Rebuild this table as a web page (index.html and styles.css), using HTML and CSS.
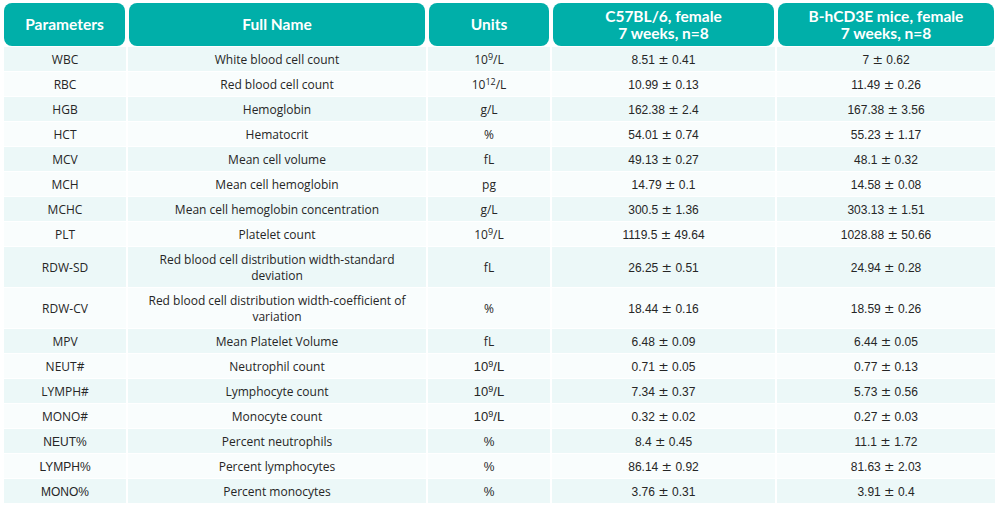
FILE: index.html
```html
<!DOCTYPE html>
<html>
<head>
<meta charset="utf-8">
<link rel="stylesheet" href="styles.css">
</head>
<body>
<div class="table">
  <div class="row head">
    <div class="cell">Parameters</div>
    <div class="cell">Full Name</div>
    <div class="cell">Units</div>
    <div class="cell">C57BL/6, female<br>7 weeks, n=8</div>
    <div class="cell">B-hCD3E mice, female<br>7 weeks, n=8</div>
  </div>
  <div class="row odd"><div class="cell">WBC</div><div class="cell">White blood cell count</div><div class="cell"><span>10<sup>9</sup>/L</span></div><div class="cell num"><span>8.51 <span class="pm">±</span> 0.41</span></div><div class="cell num"><span>7 <span class="pm">±</span> 0.62</span></div></div>
  <div class="row even"><div class="cell">RBC</div><div class="cell">Red blood cell count</div><div class="cell"><span>10<sup>12</sup>/L</span></div><div class="cell num"><span>10.99 <span class="pm">±</span> 0.13</span></div><div class="cell num"><span>11.49 <span class="pm">±</span> 0.26</span></div></div>
  <div class="row odd"><div class="cell">HGB</div><div class="cell">Hemoglobin</div><div class="cell">g/L</div><div class="cell num"><span>162.38 <span class="pm">±</span> 2.4</span></div><div class="cell num"><span>167.38 <span class="pm">±</span> 3.56</span></div></div>
  <div class="row even"><div class="cell">HCT</div><div class="cell">Hematocrit</div><div class="cell">%</div><div class="cell num"><span>54.01 <span class="pm">±</span> 0.74</span></div><div class="cell num"><span>55.23 <span class="pm">±</span> 1.17</span></div></div>
  <div class="row odd"><div class="cell">MCV</div><div class="cell">Mean cell volume</div><div class="cell">fL</div><div class="cell num"><span>49.13 <span class="pm">±</span> 0.27</span></div><div class="cell num"><span>48.1 <span class="pm">±</span> 0.32</span></div></div>
  <div class="row even"><div class="cell">MCH</div><div class="cell">Mean cell hemoglobin</div><div class="cell">pg</div><div class="cell num"><span>14.79 <span class="pm">±</span> 0.1</span></div><div class="cell num"><span>14.58 <span class="pm">±</span> 0.08</span></div></div>
  <div class="row odd"><div class="cell">MCHC</div><div class="cell">Mean cell hemoglobin concentration</div><div class="cell">g/L</div><div class="cell num"><span>300.5 <span class="pm">±</span> 1.36</span></div><div class="cell num"><span>303.13 <span class="pm">±</span> 1.51</span></div></div>
  <div class="row even"><div class="cell">PLT</div><div class="cell">Platelet count</div><div class="cell"><span>10<sup>9</sup>/L</span></div><div class="cell num"><span>1119.5 <span class="pm">±</span> 49.64</span></div><div class="cell num"><span>1028.88 <span class="pm">±</span> 50.66</span></div></div>
  <div class="row odd"><div class="cell">RDW-SD</div><div class="cell wrap">Red blood cell distribution width-standard deviation</div><div class="cell">fL</div><div class="cell num"><span>26.25 <span class="pm">±</span> 0.51</span></div><div class="cell num"><span>24.94 <span class="pm">±</span> 0.28</span></div></div>
  <div class="row even"><div class="cell">RDW-CV</div><div class="cell wrap">Red blood cell distribution width-coefficient of variation</div><div class="cell">%</div><div class="cell num"><span>18.44 <span class="pm">±</span> 0.16</span></div><div class="cell num"><span>18.59 <span class="pm">±</span> 0.26</span></div></div>
  <div class="row odd"><div class="cell">MPV</div><div class="cell">Mean Platelet Volume</div><div class="cell">fL</div><div class="cell num"><span>6.48 <span class="pm">±</span> 0.09</span></div><div class="cell num"><span>6.44 <span class="pm">±</span> 0.05</span></div></div>
  <div class="row even"><div class="cell">NEUT#</div><div class="cell">Neutrophil count</div><div class="cell alt"><span>10<sup>9</sup>/L</span></div><div class="cell num"><span>0.71 <span class="pm">±</span> 0.05</span></div><div class="cell num"><span>0.77 <span class="pm">±</span> 0.13</span></div></div>
  <div class="row odd"><div class="cell">LYMPH#</div><div class="cell">Lymphocyte count</div><div class="cell alt"><span>10<sup>9</sup>/L</span></div><div class="cell num"><span>7.34 <span class="pm">±</span> 0.37</span></div><div class="cell num"><span>5.73 <span class="pm">±</span> 0.56</span></div></div>
  <div class="row even"><div class="cell">MONO#</div><div class="cell">Monocyte count</div><div class="cell alt"><span>10<sup>9</sup>/L</span></div><div class="cell num"><span>0.32 <span class="pm">±</span> 0.02</span></div><div class="cell num"><span>0.27 <span class="pm">±</span> 0.03</span></div></div>
  <div class="row odd"><div class="cell alt2">NEUT%</div><div class="cell">Percent neutrophils</div><div class="cell alt2">%</div><div class="cell num"><span>8.4 <span class="pm">±</span> 0.45</span></div><div class="cell num"><span>11.1 <span class="pm">±</span> 1.72</span></div></div>
  <div class="row even"><div class="cell alt2">LYMPH%</div><div class="cell">Percent lymphocytes</div><div class="cell alt2">%</div><div class="cell num"><span>86.14 <span class="pm">±</span> 0.92</span></div><div class="cell num"><span>81.63 <span class="pm">±</span> 2.03</span></div></div>
  <div class="row odd"><div class="cell alt2">MONO%</div><div class="cell">Percent monocytes</div><div class="cell alt2">%</div><div class="cell num"><span>3.76 <span class="pm">±</span> 0.31</span></div><div class="cell num"><span>3.91 <span class="pm">±</span> 0.4</span></div></div>
</div>
</body>
</html>
```
FILE: styles.css
```css
html, body {
  margin: 0;
  padding: 0;
  background: #ffffff;
}
.table {
  display: flex;
  flex-direction: column;
  gap: 1px;
  width: 994px;
  padding: 3px 0 0 2px;
  font-family: "Open Sans", "Noto Sans", sans-serif;
  color: #262626;
}
.row {
  display: grid;
  grid-template-columns: 125px 300px 124px 225px 220px;
}
.cell {
  display: flex;
  align-items: center;
  justify-content: center;
  text-align: center;
  font-size: 12px;
  line-height: 16px;
  padding: 5px 6px 3px;
  margin: 0 1px;
  min-height: 16px;
}
.row .cell:first-child {
  margin-left: 2px;
}
.head .cell {
  margin: 0 2px;
  height: 43px;
  box-sizing: border-box;
  padding: 0 6px;
  background: #00afa9;
  color: #ffffff;
  font-family: "Lato", "Open Sans", sans-serif;
  font-weight: 700;
  font-size: 15.5px;
  line-height: 17px;
  border-radius: 8px;
}
.odd .cell { background: #ecf8f8; }
.even .cell { background: #f9fdfd; }
.wrap { padding-left: 20px; padding-right: 20px; }
.num {
  font-family: "Liberation Sans", Arial, sans-serif;
  font-size: 12px;
}
.pm {
  font-family: "DejaVu Sans", sans-serif;
  font-size: 12.5px;
}
.alt {
  font-family: "Liberation Sans", Arial, sans-serif;
  font-size: 13px;
}
.alt2 {
  font-family: "Liberation Sans", Arial, sans-serif;
  font-size: 12px;
}
sup {
  font-size: 9px;
  line-height: 0;
  vertical-align: 4px;
}
```
